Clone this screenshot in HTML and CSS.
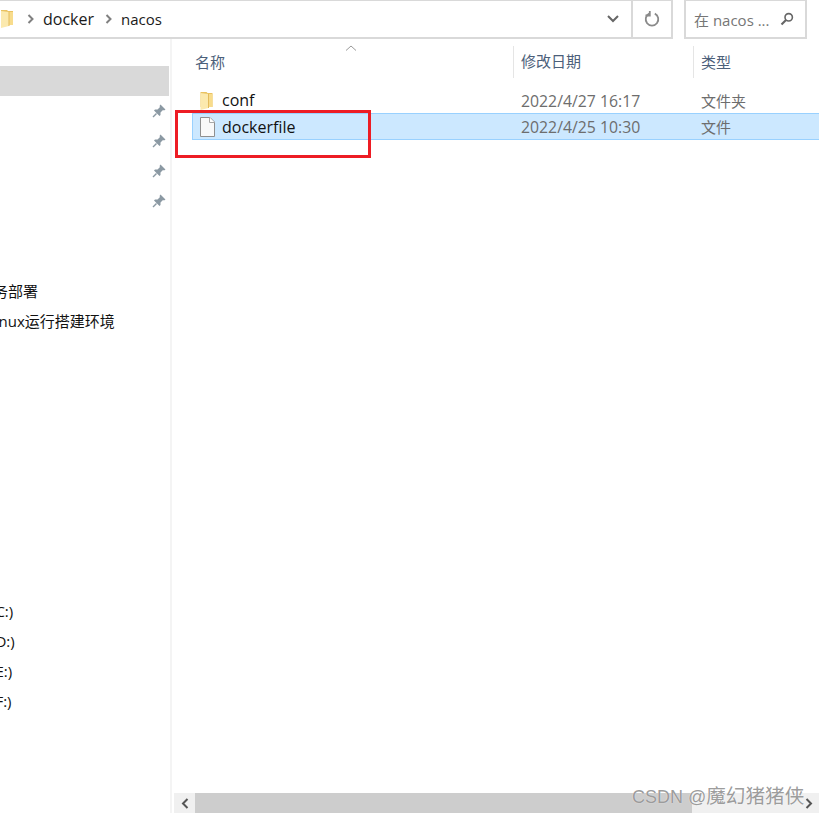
FILE: index.html
```html
<!DOCTYPE html>
<html lang="zh-CN">
<head>
  <meta charset="UTF-8">
  <title>nacos</title>
  <link rel="stylesheet" href="styles.css">
</head>
<body>

  <div class="toolbar">
    <div class="address">
      <div class="crumbs">
        <svg class="crumb-folder" width="14" height="18" viewBox="0 0 14 18">
          <use href="#folder"/>
        </svg>
        <svg class="chev" width="7" height="10" viewBox="0 0 7 10"><path d="M1.500 1l4 4-4 4" fill="none" stroke="#808080" stroke-width="2"/></svg>
        <span class="crumb">docker</span>
        <svg class="chev" width="7" height="10" viewBox="0 0 7 10"><path d="M1.500 1l4 4-4 4" fill="none" stroke="#808080" stroke-width="2"/></svg>
        <span class="crumb crumb-last">nacos</span>
      </div>
      <div class="addr-btn drop">
        <svg width="12" height="8" viewBox="0 0 12 8"><path d="M1 1l5 5 5-5" fill="none" stroke="#666" stroke-width="2"/></svg>
      </div>
      <div class="addr-btn refresh">
        <svg width="16" height="16" viewBox="0 0 16 16"><path d="M5.200 2.600A6.300 6.300 0 1 0 10.800 2.600" fill="none" stroke="#8a8a8a" stroke-width="1.800"/><path d="M5.800 0v4.500H1.500" fill="none" stroke="#8a8a8a" stroke-width="1.800"/></svg>
      </div>
    </div>
    <div class="search">
      <span>在 nacos ...</span>
      <svg width="14" height="14" viewBox="0 0 14 14"><circle cx="8.700" cy="5.300" r="3.700" fill="none" stroke="#666" stroke-width="1.600"/><path d="M6 8l-4.500 4.500" stroke="#666" stroke-width="2.200"/></svg>
    </div>
  </div>

  <div class="main">
    <div class="sidebar">
      <div class="nav-row selected"></div>
      <div class="nav-row pinned"><svg class="pin" width="14" height="14" viewBox="0 0 14 14"><use href="#pin"/></svg></div>
      <div class="nav-row pinned"><svg class="pin" width="14" height="14" viewBox="0 0 14 14"><use href="#pin"/></svg></div>
      <div class="nav-row pinned"><svg class="pin" width="14" height="14" viewBox="0 0 14 14"><use href="#pin"/></svg></div>
      <div class="nav-row pinned"><svg class="pin" width="14" height="14" viewBox="0 0 14 14"><use href="#pin"/></svg></div>
      <div class="nav-group">
        <div class="nav-row"><span class="cut-a">服务部署</span></div>
        <div class="nav-row"><span class="cut-b">Linux运行搭建环境</span></div>
      </div>
      <div class="drives">
        <div class="nav-row"><span class="cut-c">(C:)</span></div>
        <div class="nav-row"><span class="cut-c">(D:)</span></div>
        <div class="nav-row"><span class="cut-c">(E:)</span></div>
        <div class="nav-row"><span class="cut-c">(F:)</span></div>
      </div>
    </div>

    <div class="files">
      <div class="list">
        <svg class="sort" width="12" height="6" viewBox="0 0 12 6"><path d="M1 5.500L6 1l5 4.500" fill="none" stroke="#9a9a9a"/></svg>
        <div class="head">
          <div class="col-name">名称</div>
          <div class="col-date">修改日期</div>
          <div class="col-type">类型</div>
        </div>
        <div class="row">
          <div class="col-name">
            <svg class="icon" width="15" height="18" viewBox="0 0 14 18">
              <use href="#folder"/>
            </svg>
            <span class="conf">conf</span>
          </div>
          <div class="col-date">2022/4/27 16:17</div>
          <div class="col-type cjk">文件夹</div>
        </div>
        <div class="row active">
          <div class="col-name">
            <svg class="icon" width="15" height="20" viewBox="0 0 15 20">
              <path d="M.500.500h9.500l4.500 4.500v14.500h-14z" fill="#f9f9f9" stroke="#8f8f8f"/>
              <path d="M9.500.500v5h5" fill="#fff" stroke="#a8a8a8"/>
            </svg>
            <span>dockerfile</span>
          </div>
          <div class="col-date">2022/4/25 10:30</div>
          <div class="col-type cjk">文件</div>
        </div>
      </div>
      <div class="hscroll">
        <div class="arrow"><svg width="8" height="11" viewBox="0 0 8 11"><path d="M6.500 1L2 5.500 6.500 10" fill="none" stroke="#555" stroke-width="2"/></svg></div>
        <div class="thumb"></div>
        <div class="track"></div>
        <div class="arrow"><svg width="8" height="11" viewBox="0 0 8 11"><path d="M1.500 1L6 5.500 1.500 10" fill="none" stroke="#555" stroke-width="2"/></svg></div>
      </div>
    </div>
  </div>

  <div class="redbox"></div>
  <div class="watermark">CSDN @<span class="wm-name">魔幻猪猪侠</span></div>

  <svg class="defs" width="0" height="0">
    <symbol id="pin" viewBox="0 0 14 14">
      <path d="M8.500 0.500L13.500 5.500 12 6.500 11 6 8.500 8.500 8.500 11 7.500 12 2 6.500 3 5.500 5.500 5.500 8 3 7.500 2z" fill="#8b99a3"/>
      <path d="M4.500 9.500L1 13" stroke="#8b99a3" stroke-width="1.500"/>
    </symbol>
    <symbol id="folder" viewBox="0 0 14 18">
      <path d="M1 0h6l1 1h5v14H1z" fill="#e9c262"/>
      <path d="M8 2h5v13H8z" fill="#f8dc8c"/>
      <path d="M1 1l8 1v14l-8 2z" fill="#fbe9ae"/>
      <path d="M9 2v14" stroke="#e3bb5c"/>
    </symbol>
  </svg>

</body>
</html>
```

FILE: styles.css
```css
* { box-sizing: border-box; }
html, body {
  height: 100%;
}
body {
  margin: 0;
  background-color: white;
  color: #1a1a1a;
  font-family: "Open Sans", "Noto Sans CJK SC", sans-serif;
  font-size: 15px;
  overflow: hidden;
  position: relative;
}

/* top bar */
.toolbar {
  display: flex;
  height: 39px;
}
.address {
  width: 673px;
  display: flex;
  border: 2px solid #d9d9d9;
  border-width: 1px 2px 2px 0;
}
.crumbs {
  flex: 1;
  display: flex;
  align-items: center;
}
.crumb-folder { margin-left: 0; }
.chev { margin: 0 9px 0 13px; }
.crumb + .chev { margin: 0 9px 0 11px; }
.crumb { font-size: 16px; padding-bottom: 1px; }
.crumb-last { font-size: 15px; }
.addr-btn {
  display: flex;
  align-items: center;
  justify-content: center;
}
.drop { width: 38px; border-right: 2px solid #d9d9d9; }
.refresh { width: 38px; }
.search {
  width: 123px;
  margin-left: 11px;
  border: 2px solid #d9d9d9;
  border-width: 1px 2px 2px;
  padding-left: 8px;
  display: flex;
  align-items: center;
  color: #767676;
  white-space: nowrap;
}
.search svg { margin-left: 10px; }

.main {
  display: flex;
  height: 774px;
}

/* left navigation, cut off at the window edge */
.sidebar {
  width: 172px;
  padding-top: 27px;
  border-right: 2px solid #f4f4f4;
  overflow: hidden;
  white-space: nowrap;
}
.nav-row {
  height: 30px;
  display: flex;
  align-items: center;
  color: #111;
}
.nav-row span { padding-bottom: 2px; }
.selected { background-color: #d9d9d9; width: 169px; }
.pinned { justify-content: flex-end; padding-right: 4px; }
.pin { display: block; }
.nav-group { margin-top: 60px; }
.drives { margin-top: 261px; }
.cut-a { margin-left: -22px; }
.cut-b { margin-left: -13px; }
.cut-c { margin-left: -9px; }

/* file list */
.files {
  flex: 1;
  min-width: 0;
  display: flex;
  flex-direction: column;
  padding-left: 2px;
}
.list {
  flex: 1;
  padding-top: 7px;
  position: relative;
}
.sort {
  position: absolute;
  left: 171px;
  top: 6px;
}
.head, .row {
  display: grid;
  grid-template-columns: 322px 180px 1fr;
  padding-left: 17px;
}
.head {
  height: 32px;
  align-items: center;
  color: #4c607a;
  font-size: 15px;
}
.head .col-name { padding-left: 4px; padding-bottom: 2px; }
.head .col-date, .head .col-type {
  height: 32px;
  line-height: 31px;
  border-left: 1px solid #e5e5e5;
  padding-left: 7px;
}
.head .col-type { line-height: 32px; }
.row {
  height: 27px;
  align-items: center;
  border: 1px solid transparent;
  font-size: 16px;
}
.head + .row { margin-top: 10px; height: 25px; padding-bottom: 2px; }
.row .col-name { display: flex; align-items: center; padding-left: 7px; color: #111; }
.row .col-date, .row .col-type { color: #6d6d6d; padding-left: 7px; }
.row .col-date { font-size: 15.8px; }
.row .cjk { font-size: 15px; }
.head + .row .cjk { padding-bottom: 2px; }
.row .icon { margin-right: 7px; }
.head + .row .icon { margin-right: 8px; }
.conf { padding-bottom: 2px; }
.active {
  background-color: #cce8ff;
  border-color: #99d1ff;
  border-right: 0;
  margin-left: 18px;
  padding-left: 0;
  grid-template-columns: 321px 180px 1fr;
}

.hscroll {
  height: 20px;
  display: flex;
}
.arrow {
  width: 21px;
  background-color: #f0f0f0;
  display: flex;
  align-items: center;
  justify-content: center;
}
.thumb { width: 497px; background-color: #cdcdcd; }
.track { flex: 1; background-color: #f0f0f0; }

/* overlays */
.redbox {
  position: absolute;
  left: 175px;
  top: 110px;
  width: 196px;
  height: 48px;
  border: 3px solid #ed1c24;
}
.watermark {
  position: absolute;
  left: 632px;
  top: 780px;
  font-family: "Liberation Sans", "Noto Sans CJK SC", sans-serif;
  font-size: 18px;
  color: rgba(130, 130, 130, 0.8);
  text-shadow: 0 0 1px white;
  white-space: nowrap;
}
.wm-name { font-size: 19.6px; }
.defs { position: absolute; }
```
